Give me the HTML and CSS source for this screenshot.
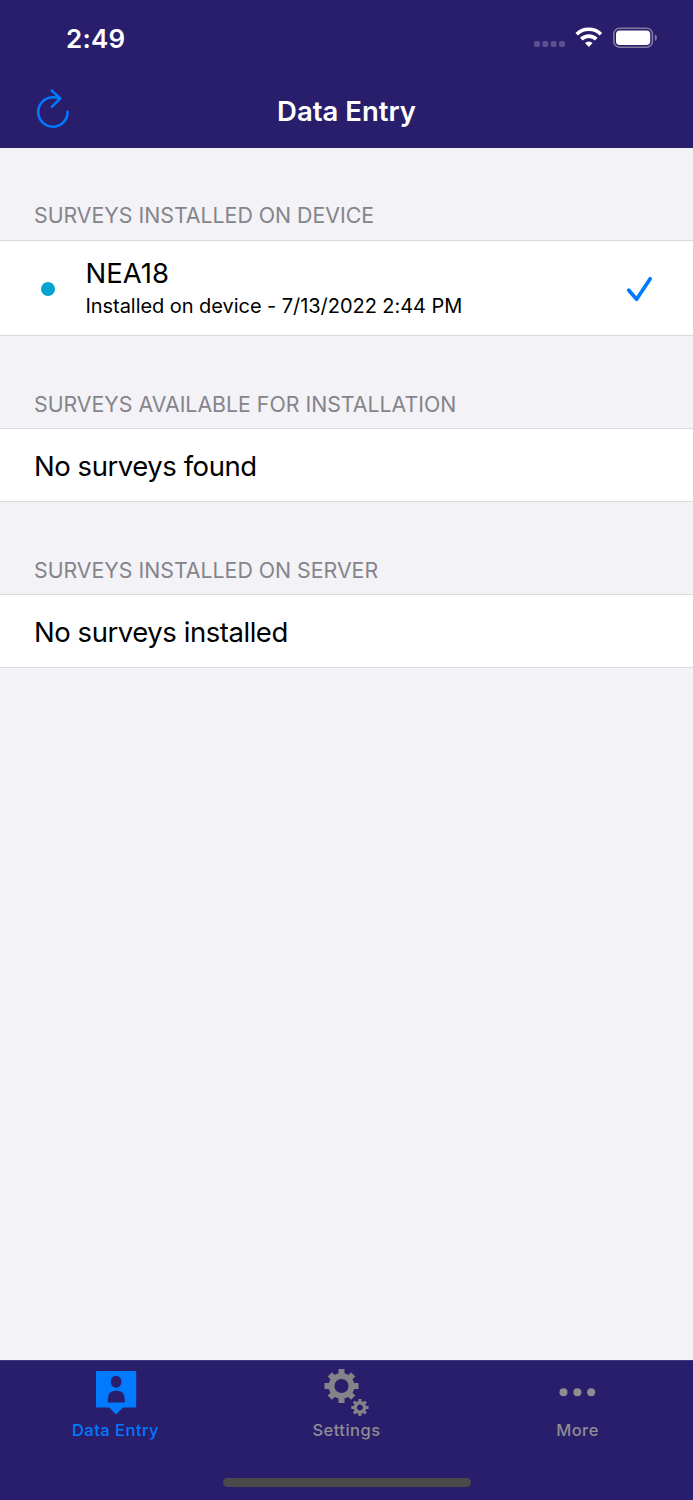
FILE: index.html
```
<!DOCTYPE html>
<html lang="en">
<head>
<meta charset="utf-8">
<title>Data Entry</title>
<link rel="stylesheet" href="styles.css">
</head>
<body>
<div class="screen">
  <header class="top">
    <div class="status">
      <span class="time">2:49</span>
      <svg class="indicators" width="126" height="30" viewBox="0 0 126 30">
        <g fill="#5b5191"><rect x="2" y="17" width="6" height="6" rx="2"/><rect x="10.3" y="17" width="6" height="6" rx="2"/><rect x="18.6" y="17" width="6" height="6" rx="2"/><rect x="27" y="17" width="6" height="6" rx="2"/></g>
        <g fill="none" stroke="#fff" stroke-width="3.7"><path d="M44.7 10.2a17.3 17.3 0 0 1 24.2 0"/><path d="M49.3 15.1a10.7 10.7 0 0 1 15 0"/></g>
        <path d="M56.8 22.9l-3.8-3.9a5.5 5.5 0 0 1 7.6 0z" fill="#fff"/>
        <rect x="81.8" y="4.3" width="38.6" height="18.9" rx="5.8" fill="none" stroke="#81799f" stroke-width="1.6"/>
        <rect x="84" y="6.600" width="34.2" height="14.4" rx="3.8" fill="#fff"/>
        <path d="M122.8 10.600v6.400q2.200-1 2.200-3.200t-2.200-3.200z" fill="#81799f"/>
      </svg>
    </div>
    <div class="nav">
      <svg class="refresh" width="40" height="44" viewBox="0 0 40 44" fill="none" stroke="#007aff" stroke-width="2.5" stroke-linecap="round" stroke-linejoin="round">
        <path d="M33.600 23.800A14.700 14.700 0 1 1 19 9.300Q22.500 9.300 26 10.200M17.700 2.500l8.600 8-8.600 8.400"/>
      </svg>
      <h1 class="title">Data Entry</h1>
    </div>
  </header>
  <main class="content">
    <section class="group">
      <h2 class="heading">SURVEYS INSTALLED ON DEVICE</h2>
      <div class="row survey">
        <span class="dot"></span>
        <div class="details">
          <div class="name">NEA18</div>
          <div class="sub">Installed on device - 7/13/2022 2:44 PM</div>
        </div>
        <svg class="check" width="30" height="30" viewBox="0 0 30 30" fill="none" stroke="#007aff" stroke-width="3.700" stroke-linecap="round" stroke-linejoin="round"><path d="M3.800 16.200l7.800 9L25.200 4.800"/></svg>
      </div>
    </section>
    <section class="group">
      <h2 class="heading lower">SURVEYS AVAILABLE FOR INSTALLATION</h2>
      <div class="row message">No surveys found</div>
    </section>
    <section class="group">
      <h2 class="heading lower">SURVEYS INSTALLED ON SERVER</h2>
      <div class="row message">No surveys installed</div>
    </section>
  </main>
  <footer class="tabs">
    <nav class="tab-list">
      <div class="tab active">
        <svg width="44" height="50" viewBox="0 0 44 50">
          <path fill="#007aff" d="M3 3h38.200q1 0 1 1v34.500q0 1-1 1H29l-6.900 7-6.900-7H3q-1 0-1-1V4q0-1 1-1z"/>
          <ellipse cx="22.100" cy="13.700" rx="5.400" ry="6" fill="#281e6b"/><path fill="#281e6b" d="M13.800 34.600V31q0-8.300 8.500-8.300t8.500 8.300v3.600z"/>
        </svg>
        <span class="label">Data Entry</span>
      </div>
      <div class="tab">
        <svg class="gears" width="48" height="50" viewBox="0 0 48 50" fill="none" stroke="#84838a">
          <g transform="translate(19.500 18)"><circle r="10" stroke-width="5.800"/><path stroke-width="6" d="M0-17v6M0 17v-6M-17 0h6M17 0h-6M-11.700-11.700l4 4M11.700-11.700l-4 4M-11.700 11.700l4-4M11.700 11.700l-4-4"/></g>
          <g transform="translate(37.900 39.500)"><circle r="4.700" stroke-width="3.400"/><path stroke-width="3" d="M0-8.600v3M0 8.600v-3M-8.600 0h3M8.600 0h-3M-6-6l2 2M6-6l-2 2M-6 6l2-2M6 6l-2-2"/></g>
        </svg>
        <span class="label">Settings</span>
      </div>
      <div class="tab">
        <svg width="44" height="50" viewBox="0 0 44 50" fill="#8e8d92"><circle cx="7.500" cy="24.200" r="4"/><circle cx="21.400" cy="24.200" r="4"/><circle cx="35.200" cy="24.200" r="4"/></svg>
        <span class="label">More</span>
      </div>
    </nav>
    <div class="home-bar"></div>
  </footer>
</div>
</body>
</html>
```
FILE: styles.css
```
* { box-sizing: border-box; }
body { margin: 0; font-family: Inter, "Liberation Sans", sans-serif; }
svg { display: block; flex: none; }
.screen { width: 693px; height: 1500px; display: flex; flex-direction: column; background: #f2f2f7; color: #000; overflow: hidden; }
.top { height: 148px; flex: none; background: #281e6b; color: #fff; }
.status { height: 74px; display: flex; justify-content: space-between; align-items: flex-start; padding: 24px 35px 0 66px; }
.time { font-size: 26px; line-height: 30px; font-weight: 600; letter-spacing: 0.2px; }
.nav { height: 74px; display: grid; grid-template-columns: 140px 1fr 140px; align-items: start; }
.refresh { margin: 14px 0 0 34px; }
.title { margin: 20px 0 0; font-size: 27.500px; line-height: 35px; font-weight: 600; text-align: center; white-space: nowrap; }
.content { flex: 1; }
.heading { margin: 0; height: 92px; padding: 54px 0 0 34px; font-size: 21.300px; line-height: 26px; font-weight: 400; color: #85848a; white-space: nowrap; }
.lower { padding-top: 55px; }
.row { height: 74px; display: flex; align-items: center; padding-left: 34px; background: #fff; border: solid #d9d8dd; border-width: 1px 0; font-size: 27.500px; line-height: 34px; white-space: nowrap; }
.message { letter-spacing: -0.450px; padding-top: 1px; }
.survey { height: 96px; padding: 0 38px 0 41px; }
.dot { width: 14px; height: 14px; margin-top: 1px; border-radius: 50%; background: #04a3cf; flex: none; }
.check { margin-top: 1px; }
.details { flex: 1; margin: 0 0 0 30.500px; }
.name { height: 34px; }
.sub { font-size: 20px; line-height: 28px; margin-top: 2px; letter-spacing: -0.050px; }
.tabs { height: 140px; flex: none; background: #281e6b; border-top: 1px solid #40387b; color: #8e8d92; }
.tab-list { display: grid; grid-template-columns: repeat(3, 1fr); height: 117px; padding-top: 7px; }
.tab { display: flex; flex-direction: column; align-items: center; font-size: 16.500px; line-height: 24px; font-weight: 500; letter-spacing: 0.480px; white-space: nowrap; }
.active { color: #007aff; }
.gears { margin-right: 2px; }
.home-bar { width: 248px; height: 9px; margin: 0 auto; border-radius: 5px; background: #4a4a4a; }
```
